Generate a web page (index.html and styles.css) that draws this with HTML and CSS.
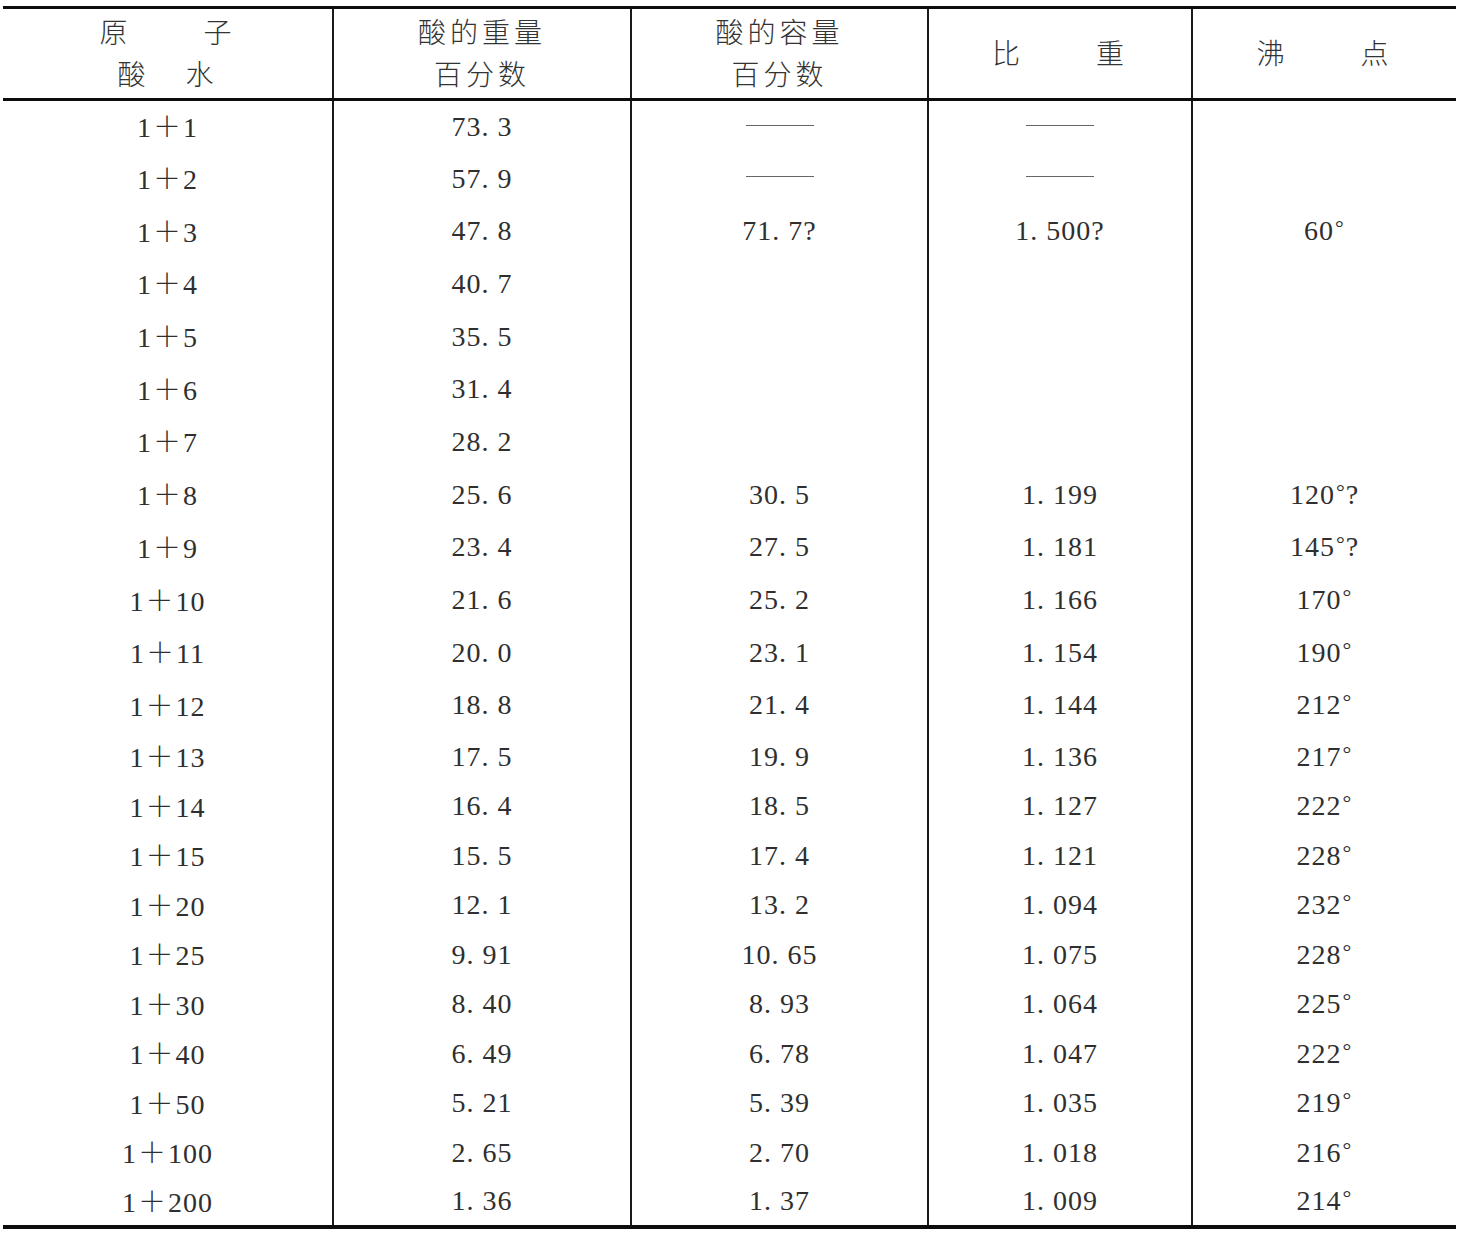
FILE: index.html
```html
<!DOCTYPE html>
<html lang="zh">
<head>
<meta charset="utf-8">
<title>酸的比重与沸点</title>
<link rel="stylesheet" href="styles.css">
</head>
<body>
<table class="tbl">
  <colgroup>
    <col class="c1"><col class="c2"><col class="c3"><col class="c4"><col class="c5">
  </colgroup>
  <thead>
    <tr>
      <th><div class="h-split"><span>原</span><span>子</span></div><div class="h-split narrow"><span>酸</span><span>水</span></div></th>
      <th><div>酸的重量</div><div>百分数</div></th>
      <th><div>酸的容量</div><div>百分数</div></th>
      <th><div class="h-split wide"><span>比</span><span>重</span></div></th>
      <th><div class="h-split wide"><span>沸</span><span>点</span></div></th>
    </tr>
  </thead>
  <tbody>
    <tr class="ra"><td>1<span class="pl">＋</span>1</td><td>73<span class="p">.</span>3</td><td><span class="dash"></span></td><td><span class="dash"></span></td><td></td></tr>
    <tr class="ra"><td>1<span class="pl">＋</span>2</td><td>57<span class="p">.</span>9</td><td><span class="dash"></span></td><td><span class="dash"></span></td><td></td></tr>
    <tr class="ra"><td>1<span class="pl">＋</span>3</td><td>47<span class="p">.</span>8</td><td>71<span class="p">.</span>7?</td><td>1<span class="p">.</span>500?</td><td>60<span class="deg">°</span></td></tr>
    <tr class="ra"><td>1<span class="pl">＋</span>4</td><td>40<span class="p">.</span>7</td><td></td><td></td><td></td></tr>
    <tr class="ra"><td>1<span class="pl">＋</span>5</td><td>35<span class="p">.</span>5</td><td></td><td></td><td></td></tr>
    <tr class="ra"><td>1<span class="pl">＋</span>6</td><td>31<span class="p">.</span>4</td><td></td><td></td><td></td></tr>
    <tr class="ra"><td>1<span class="pl">＋</span>7</td><td>28<span class="p">.</span>2</td><td></td><td></td><td></td></tr>
    <tr class="ra"><td>1<span class="pl">＋</span>8</td><td>25<span class="p">.</span>6</td><td>30<span class="p">.</span>5</td><td>1<span class="p">.</span>199</td><td>120<span class="deg">°</span>?</td></tr>
    <tr class="ra"><td>1<span class="pl">＋</span>9</td><td>23<span class="p">.</span>4</td><td>27<span class="p">.</span>5</td><td>1<span class="p">.</span>181</td><td>145<span class="deg">°</span>?</td></tr>
    <tr class="ra"><td>1<span class="pl">＋</span>10</td><td>21<span class="p">.</span>6</td><td>25<span class="p">.</span>2</td><td>1<span class="p">.</span>166</td><td>170<span class="deg">°</span></td></tr>
    <tr class="ra"><td>1<span class="pl">＋</span>11</td><td>20<span class="p">.</span>0</td><td>23<span class="p">.</span>1</td><td>1<span class="p">.</span>154</td><td>190<span class="deg">°</span></td></tr>
    <tr class="ra"><td>1<span class="pl">＋</span>12</td><td>18<span class="p">.</span>8</td><td>21<span class="p">.</span>4</td><td>1<span class="p">.</span>144</td><td>212<span class="deg">°</span></td></tr>
    <tr class="rb"><td>1<span class="pl">＋</span>13</td><td>17<span class="p">.</span>5</td><td>19<span class="p">.</span>9</td><td>1<span class="p">.</span>136</td><td>217<span class="deg">°</span></td></tr>
    <tr class="rb"><td>1<span class="pl">＋</span>14</td><td>16<span class="p">.</span>4</td><td>18<span class="p">.</span>5</td><td>1<span class="p">.</span>127</td><td>222<span class="deg">°</span></td></tr>
    <tr class="rb"><td>1<span class="pl">＋</span>15</td><td>15<span class="p">.</span>5</td><td>17<span class="p">.</span>4</td><td>1<span class="p">.</span>121</td><td>228<span class="deg">°</span></td></tr>
    <tr class="rb"><td>1<span class="pl">＋</span>20</td><td>12<span class="p">.</span>1</td><td>13<span class="p">.</span>2</td><td>1<span class="p">.</span>094</td><td>232<span class="deg">°</span></td></tr>
    <tr class="rb"><td>1<span class="pl">＋</span>25</td><td>9<span class="p">.</span>91</td><td>10<span class="p">.</span>65</td><td>1<span class="p">.</span>075</td><td>228<span class="deg">°</span></td></tr>
    <tr class="rb"><td>1<span class="pl">＋</span>30</td><td>8<span class="p">.</span>40</td><td>8<span class="p">.</span>93</td><td>1<span class="p">.</span>064</td><td>225<span class="deg">°</span></td></tr>
    <tr class="rb"><td>1<span class="pl">＋</span>40</td><td>6<span class="p">.</span>49</td><td>6<span class="p">.</span>78</td><td>1<span class="p">.</span>047</td><td>222<span class="deg">°</span></td></tr>
    <tr class="rb"><td>1<span class="pl">＋</span>50</td><td>5<span class="p">.</span>21</td><td>5<span class="p">.</span>39</td><td>1<span class="p">.</span>035</td><td>219<span class="deg">°</span></td></tr>
    <tr class="rb"><td>1<span class="pl">＋</span>100</td><td>2<span class="p">.</span>65</td><td>2<span class="p">.</span>70</td><td>1<span class="p">.</span>018</td><td>216<span class="deg">°</span></td></tr>
    <tr class="rb last"><td>1<span class="pl">＋</span>200</td><td>1<span class="p">.</span>36</td><td>1<span class="p">.</span>37</td><td>1<span class="p">.</span>009</td><td>214<span class="deg">°</span></td></tr>
  </tbody>
</table>
</body>
</html>
```
FILE: styles.css
```css
html, body {
  margin: 0;
  padding: 0;
  background: #ffffff;
}

body {
  padding: 6px 0 0 3px;
  font-family: "Liberation Serif", "Noto Sans CJK SC", serif;
  color: #2a2a2a;
}

.tbl {
  border-collapse: collapse;
  table-layout: fixed;
  width: 1453px;
}

.c1 { width: 330px; }
.c2 { width: 298px; }
.c3 { width: 297px; }
.c4 { width: 264px; }
.c5 { width: 264px; }

.tbl th,
.tbl td {
  padding: 0;
  text-align: center;
  vertical-align: middle;
  border-left: 2px solid #1a1a1a;
  font-weight: normal;
}

.tbl th:first-child,
.tbl td:first-child {
  border-left: none;
}

.tbl thead tr {
  height: 92px;
  border-top: 3px solid #0d0d0d;
  border-bottom: 3px solid #0d0d0d;
}

.tbl th {
  font-family: "Noto Sans CJK SC", sans-serif;
  font-size: 28px;
  line-height: 42px;
  letter-spacing: 4px;
  color: #333333;
  font-weight: 300;
  padding-bottom: 3px;
}

.h-split {
  display: flex;
  justify-content: center;
  gap: 72px;
}

.h-split.narrow {
  gap: 36px;
}

.h-split.wide {
  gap: 72px;
}

.tbl td {
  font-size: 28px;
  line-height: 1;
  letter-spacing: 1px;
  color: #2f2f2f;
}

.ra { height: 52.7px; }
.rb { height: 49.5px; }

.tbl tr.last {
  border-bottom: 4px solid #0d0d0d;
}

.p {
  display: inline-block;
  width: 16px;
  text-align: left;
}

.pl {
  font-family: "Noto Sans CJK SC", sans-serif;
  font-weight: 300;
  margin: 0 1px;
}

.deg {
  font-size: 22px;
  vertical-align: 5px;
  margin-left: 1px;
}

.dash {
  display: inline-block;
  width: 68px;
  height: 0;
  border-top: 1.5px solid #666666;
  vertical-align: 0.36em;
}
```
